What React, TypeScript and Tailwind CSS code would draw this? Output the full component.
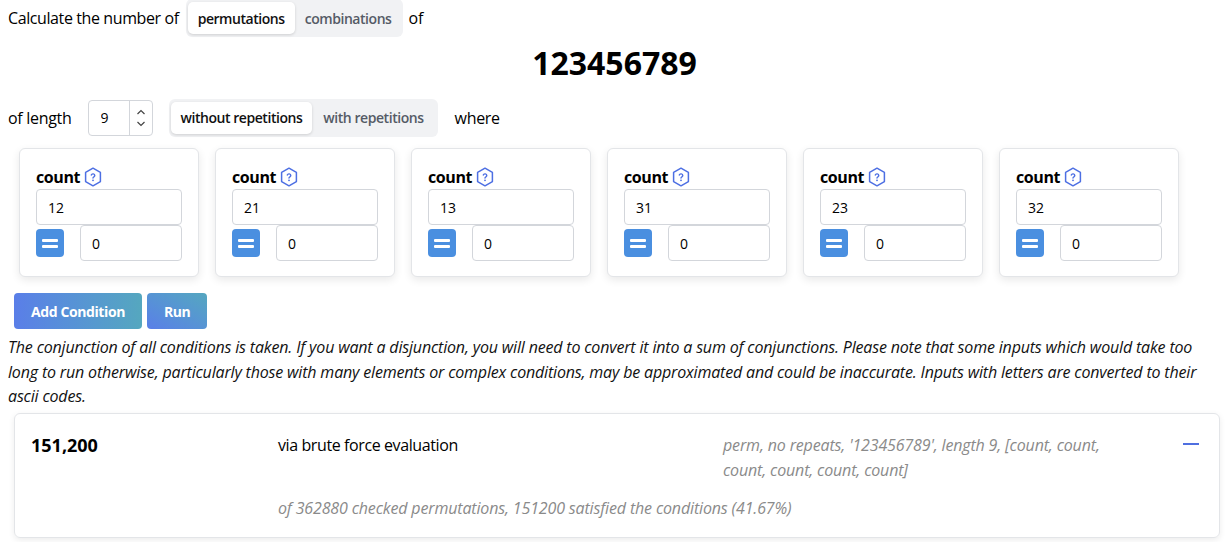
import { useState } from 'react'

const conditions = ['12', '21', '13', '31', '23', '32']

function HelpIcon() {
  return (
    <svg width="18" height="20" viewBox="0 0 18 20" fill="none" stroke="#4d6fe3" strokeLinecap="round" strokeLinejoin="round">
      <path d="M9 1.2l7.4 4.2v9.2L9 18.8l-7.4-4.2V5.4z" strokeWidth="1.5" />
      <path d="M7.3 8.1a1.8 1.8 0 0 1 3.5.5c0 1.2-1.8 1.5-1.8 2.4" strokeWidth="1.4" />
      <path d="M9 13.3h.01" strokeWidth="1.8" />
    </svg>
  )
}

function Toggle({ options, active, onChange, wide }: { options: string[]; active: number; onChange: (i: number) => void; wide?: boolean }) {
  return (
    <div className={`flex items-center bg-[#f1f2f4] rounded-md p-[2px] h-[38px] ${wide ? 'gap-[1px] pr-[4px]' : 'pr-[2px]'}`}>
      {options.map((o, i) => (
        <button
          key={o}
          onClick={() => onChange(i)}
          className={`h-[32px] px-[10px] rounded-[5px] text-[14px] font-semibold tracking-[-0.45px] ${
            i === active ? 'bg-white text-[#111] shadow-[0_1px_3px_rgba(0,0,0,0.15)]' : 'text-[#555b66]'
          }`}
        >
          {o}
        </button>
      ))}
    </div>
  )
}

function ConditionCard({ value }: { value: string }) {
  return (
    <div className="w-[180px] rounded-md border border-[#e3e5e8] bg-white px-[16px] pt-[16px] pb-[15px] shadow-[0_3px_8px_rgba(0,0,0,0.09)]">
      <div className="flex items-center gap-[4px] h-[24px]">
        <span className="font-bold text-[16px] text-black tracking-[-0.4px]">count</span>
        <HelpIcon />
      </div>
      <input
        defaultValue={value}
        className="block w-full h-[36px] rounded-[4px] border border-[#d3d6db] px-[11px] text-[14px] text-black outline-none"
      />
      <div className="flex items-center gap-[16px]">
        <button className="w-[28px] h-[28px] rounded-[4px] bg-[#4a8fe0] flex flex-col items-center justify-center gap-[3px]">
          <span className="block w-[16px] h-[3px] bg-white rounded-[1px]" />
          <span className="block w-[16px] h-[3px] bg-white rounded-[1px]" />
        </button>
        <input
          defaultValue="0"
          className="block w-[102px] h-[36px] rounded-[4px] border border-[#d3d6db] px-[11px] text-[14px] text-black outline-none"
        />
      </div>
    </div>
  )
}

export default function App() {
  const [kind, setKind] = useState(0)
  const [rep, setRep] = useState(0)

  return (
    <div className="min-h-screen bg-white text-black px-[8px] font-['Open_Sans',sans-serif] text-[16px]">
      <div className="flex items-center h-[36px]">
        <span className="tracking-[-0.4px]">Calculate the number of</span>
        <div className="ml-[7px] mr-[5px]">
          <Toggle options={['permutations', 'combinations']} active={kind} onChange={setKind} />
        </div>
        <span>of</span>
      </div>

      <h1 className="text-center text-[32px] font-bold leading-[40px] mt-[7px] mb-[15px]">123456789</h1>

      <div className="flex items-center h-[39px] gap-[16px]">
        <span className="tracking-[-0.3px]">of length</span>
        <div className="flex h-[36px] w-[65px] rounded-[4px] border border-[#d3d6db] bg-white">
          <input defaultValue="9" className="w-[40px] pl-[12px] text-[14px] outline-none" />
          <div className="flex flex-col items-center justify-center border-l border-[#d3d6db] w-[24px] gap-[6px]">
            <svg width="10" height="6" viewBox="0 0 10 6" fill="none" stroke="#444" strokeWidth="1.2"><path d="M1.5 5L5 1.5 8.5 5" /></svg>
            <svg width="10" height="6" viewBox="0 0 10 6" fill="none" stroke="#444" strokeWidth="1.2"><path d="M1.5 1L5 4.5 8.5 1" /></svg>
          </div>
        </div>
        <Toggle options={['without repetitions', 'with repetitions']} active={rep} onChange={setRep} wide />
        <span className="tracking-[-0.3px] ml-[1px]">where</span>
      </div>

      <div className="flex gap-[16px] pl-[11px] mt-[11px]">
        {conditions.map((c) => (
          <ConditionCard key={c} value={c} />
        ))}
      </div>

      <div className="flex gap-[5px] ml-[6px] mt-[16px]">
        <button className="h-[36px] px-[17px] rounded-[4px] text-white text-[14px] font-bold tracking-[-0.4px] bg-gradient-to-r from-[#5a7ee8] to-[#55a7bf]">Add Condition</button>
        <button className="h-[36px] px-[17px] rounded-[4px] text-white text-[14px] font-bold tracking-[-0.4px] bg-gradient-to-tr from-[#5a7ee8] to-[#55a7bf]">Run</button>
      </div>

      <p className="italic leading-[24.5px] mt-[6px] text-[#111] tracking-[-0.17px] whitespace-nowrap">
        The conjunction of all conditions is taken. If you want a disjunction, you will need to convert it into a sum of conjunctions. Please note that some inputs which would take too
        <br />
        long to run otherwise, particularly those with many elements or complex conditions, may be approximated and could be inaccurate. Inputs with letters are converted to their
        <br />
        ascii codes.
      </p>

      <div className="ml-[6px] mr-[1px] mt-[4px] rounded-md border border-[#e3e5e8] shadow-[0_2px_6px_rgba(0,0,0,0.08)] px-[16px] pt-[19px] pb-[16px]">
        <div className="flex">
          <div className="w-[247px] text-[18px] font-bold leading-[24px]">151,200</div>
          <div className="w-[445px] leading-[24px] tracking-[-0.4px]">via brute force evaluation</div>
          <div className="w-[400px] italic text-[#8a8a8a] leading-[25px] tracking-[-0.15px]">
            perm, no repeats, '123456789', length 9, [count, count, count, count, count, count]
          </div>
          <div className="flex-1 flex justify-end pt-[10px] pr-[4px]">
            <span className="block w-[16px] h-[2px] bg-[#4f6fe0]" />
          </div>
        </div>
        <div className="ml-[247px] mt-[13px] italic text-[#8a8a8a] leading-[25px] tracking-[-0.15px]">
          of 362880 checked permutations, 151200 satisfied the conditions (41.67%)
        </div>
      </div>
    </div>
  )
}
